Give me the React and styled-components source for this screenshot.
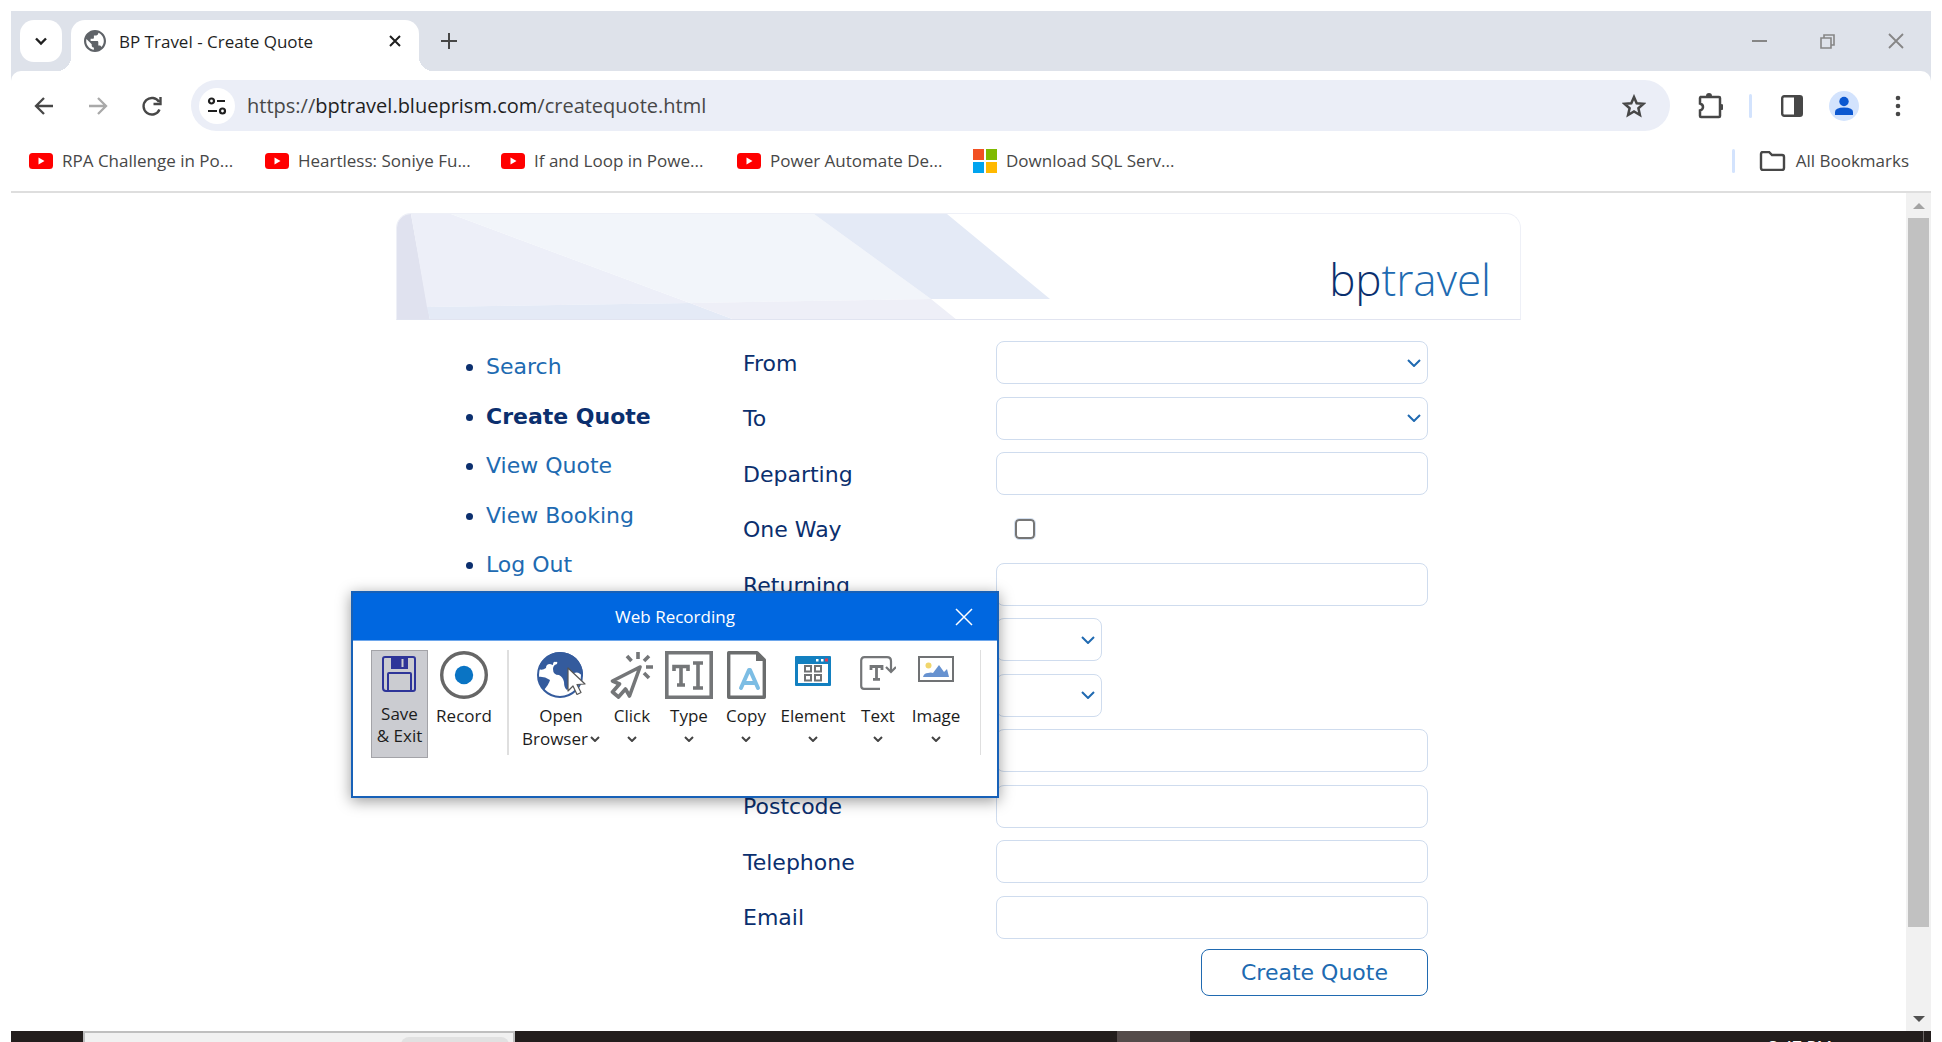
import React from 'react';
import styled, { createGlobalStyle } from 'styled-components';

const ui = '"Open Sans", "Noto Sans", sans-serif';
const page = '"DejaVu Sans", Verdana, sans-serif';

const Global = createGlobalStyle`
  * { box-sizing: border-box; }
  body { margin: 0; background: #fff; font-family: ${ui}; overflow: hidden; }
  button, input, select { font: inherit; color: inherit; margin: 0; }
  button { background: none; border: 0; padding: 0; cursor: pointer; }
  svg { display: block; flex: none; }
`;

const Screen = styled.div`
  position: relative;
  display: flex;
  flex-direction: column;
  height: 100vh;
  padding: 11px 11px 0;
`;

const TabStrip = styled.div`
  display: flex;
  align-items: flex-start;
  height: 60px;
  padding: 9px 27px 0 9px;
  background: #dee2ea;
`;
const TabSearch = styled.button`
  display: grid;
  place-items: center;
  width: 42px;
  height: 42px;
  margin-right: 9px;
  border-radius: 14px;
  background: #fff;
`;
const Tab = styled.div`
  position: relative;
  display: flex;
  align-items: center;
  width: 348px;
  height: 51px;
  padding: 0 17px 9px 13px;
  border-radius: 14px 14px 0 0;
  background: #fff;
  color: #1f1f1f;
  &::before, &::after {
    content: '';
    position: absolute;
    bottom: 0;
    width: 14px;
    height: 14px;
  }
  &::before { left: -14px; background: radial-gradient(circle at 0 0, transparent 14px, #fff 14px); }
  &::after { right: -14px; background: radial-gradient(circle at 100% 0, transparent 14px, #fff 14px); }
`;
const TabTitle = styled.span`
  flex: 1;
  padding: 2px 0 0 13px;
  font-size: 17px;
  line-height: 24px;
  white-space: nowrap;
`;
const NewTab = styled.button`
  margin: 13px auto 0 22px;
`;
const WindowControls = styled.div`
  display: flex;
  align-items: center;
  gap: 53px;
  height: 42px;
`;

const ToolbarBack = styled.div`
  background: #dee2ea;
`;
const Toolbar = styled.div`
  display: flex;
  align-items: center;
  height: 69px;
  padding: 0 20px 0 21px;
  border-radius: 10px 10px 0 0;
  background: #fff;
`;
const NavButtons = styled.div`
  display: flex;
  gap: 30px;
  margin-right: 27px;
`;
const AddressBar = styled.div`
  display: flex;
  flex: 1;
  align-items: center;
  height: 51px;
  padding: 0 24px 0 8px;
  border-radius: 26px;
  background: #ebeef7;
`;
const SiteInfo = styled.button`
  display: grid;
  place-items: center;
  width: 36px;
  height: 36px;
  border-radius: 50%;
  background: #fff;
`;
const Url = styled.span`
  flex: 1;
  padding-left: 12px;
  color: #474747;
  font-size: 20px;
  line-height: 28px;
  b { font-weight: 400; color: #1f1f1f; }
`;
const Divider = styled.span`
  width: 3px;
  height: 24px;
  border-radius: 2px;
  background: #d3e3fd;
`;
const ToolActions = styled.div`
  display: flex;
  align-items: center;
  gap: 26px;
  margin-left: 27px;
  ${Divider} { margin-right: 3px; }
`;

const Bookmarks = styled.nav`
  display: flex;
  align-items: center;
  height: 53px;
  padding: 0 22px 10px 18px;
  border-bottom: 2px solid #dedede;
  background: #fff;
`;
const Bookmark = styled.a`
  display: flex;
  align-items: center;
  gap: 9px;
  width: ${p => (p.$end ? 'auto' : '236px')};
  color: #474747;
  font-size: 17px;
  line-height: 24px;
  white-space: nowrap;
  text-decoration: none;
`;
const BookmarkEnd = styled.div`
  display: flex;
  align-items: center;
  gap: 24px;
  margin-left: auto;
`;

const Viewport = styled.div`
  display: flex;
  flex: 1;
  min-height: 0;
  background: #fff;
`;
const PageBody = styled.main`
  flex: 1;
  padding-top: 20px;
  color: #0b2f6e;
  font-family: ${page};
  font-size: 22px;
`;
const Container = styled.div`
  width: 1125px;
  max-width: 100%;
  margin: 0 auto;
`;
const Banner = styled.header`
  display: flex;
  justify-content: space-between;
  height: 107px;
  border: 1px solid #eef0f7;
  border-bottom-color: #e1e4f0;
  border-radius: 15px 15px 0 0;
  overflow: hidden;
`;
const Logo = styled.div`
  padding: 33px 29px 0 0;
  color: #0b2f6e;
  font-family: "Open Sans", "Noto Sans", sans-serif;
  font-weight: 300;
  font-size: 44px;
  line-height: 64px;
  span { color: #206ab1; }
`;
const Columns = styled.div`
  display: flex;
  padding-right: 93px;
`;
const Menu = styled.ul`
  width: 347px;
  margin: 0;
  padding: 34px 0 0 90px;
  list-style: disc;
  line-height: 26px;
`;
const MenuItem = styled.li`
  height: 26px;
  margin-bottom: ${p => (p.$tight ? '23px' : '24px')};
  a {
    color: ${p => (p.$active ? '#0b2f6e' : '#206ab1')};
    font-weight: ${p => (p.$active ? 700 : 400)};
    text-decoration: none;
  }
`;
const Form = styled.form`
  flex: 1;
`;
const Fields = styled.div`
  display: grid;
  grid-auto-rows: 1fr;
  height: 610px;
  padding-top: 15px;
  margin-bottom: 4px;
  box-sizing: content-box;
`;
const Field = styled.div`
  display: flex;
  align-items: center;
  label { width: 253px; padding-top: 2px; line-height: 28px; }
`;
const TextBox = styled.input`
  flex: 1;
  min-width: 0;
  height: 43px;
  padding: 0 12px;
  border: 1px solid #cfdcee;
  border-radius: 8px;
  background: #fff;
`;
const SelectWrap = styled.div`
  display: grid;
  flex: ${p => (p.$short ? '0 0 106px' : '1')};
  align-items: center;
  svg { grid-area: 1 / 1; justify-self: end; margin-right: 7px; pointer-events: none; }
`;
const Select = styled.select`
  grid-area: 1 / 1;
  width: 100%;
  height: 43px;
  padding: 0 12px;
  appearance: none;
  border: 1px solid #cfdcee;
  border-radius: 8px;
  background: #fff;
`;
const TickBox = styled.input`
  appearance: none;
  width: 20px;
  height: 20px;
  margin-left: 19px;
  border: 2px solid #767676;
  border-radius: 4px;
  outline: 1px solid #d3dfef;
  background: #fff;
`;
const Submit = styled.button`
  display: block;
  width: 227px;
  height: 47px;
  margin-left: auto;
  border: 1px solid #206ab1;
  border-radius: 8px;
  color: #206ab1;
  background: #fff;
`;

const ScrollBar = styled.div`
  display: flex;
  flex-direction: column;
  align-items: center;
  width: 25px;
  background: #f1f1f1;
`;
const ScrollArrow = styled.button`
  display: grid;
  place-items: center;
  width: 25px;
  height: 25px;
`;
const ScrollTrack = styled.div`
  flex: 1;
  width: 21px;
`;
const ScrollThumb = styled.div`
  height: 90%;
  background: #c1c1c1;
`;

const TaskBar = styled.div`
  display: flex;
  height: 11px;
  padding: 0 7px 0 72px;
  overflow: hidden;
  background: #231e1d;
`;
const TaskSearch = styled.div`
  width: 432px;
  padding: 4px 4px 0 0;
  border: 2px solid #bfbfbf;
  border-bottom: 0;
  background: #f1f1f1;
`;
const TaskPill = styled.div`
  width: 108px;
  height: 12px;
  margin-left: auto;
  border-radius: 8px 8px 0 0;
  background: #e1e1e1;
`;
const TaskActive = styled.div`
  width: 73px;
  margin-left: 602px;
  background: #544b4a;
`;
const TaskClock = styled.div`
  margin: 6px 91px 0 auto;
  color: #fff;
  font-size: 17px;
  line-height: 20px;
`;
const TaskEdge = styled.div`
  width: 1px;
  background: #6b6665;
`;

const Dialog = styled.section`
  position: absolute;
  top: 591px;
  left: 351px;
  width: 648px;
  height: 207px;
  border: 2px solid #1761b8;
  background: #fff;
  box-shadow: 0 3px 14px rgba(0, 0, 0, 0.4);
`;
const DialogTitle = styled.header`
  display: grid;
  grid-template-columns: 1fr auto 1fr;
  align-items: center;
  height: 48px;
  padding: 0 24px;
  border-bottom: 1px solid #6ea7ec;
  background: #0067e0;
  color: #fff;
  h2 { grid-column: 2; margin: 0; font-size: 17px; font-weight: 400; line-height: 24px; }
  button { justify-self: end; }
`;
const Ribbon = styled.div`
  display: flex;
  padding: 9px 16px 0 18px;
`;
const Tool = styled.button`
  display: flex;
  flex-direction: column;
  align-items: center;
  flex: 0 0 ${p => p.$w}px;
  min-width: 0;
  height: 108px;
  color: #1c1c1c;
  font-size: 17px;
  line-height: 22px;
  white-space: nowrap;
`;
const SaveTool = styled(Tool)`
  border: 1px solid #a3a3a8;
  background: #cbccd1;
`;
const ToolIcon = styled.span`
  display: flex;
  justify-content: center;
  height: ${p => (p.$save ? '52px' : '55px')};
  padding-top: ${p => (p.$save ? '5px' : p.$low ? '6px' : '1px')};
`;
const ToolMore = styled.span`
  display: flex;
  align-items: center;
  gap: 2px;
  height: 24px;
`;
const RibbonRule = styled.span`
  width: ${p => p.$w}px;
  height: 105px;
  margin: ${p => p.$m};
  background: #dfdfdf;
`;

const Stroke = ({ w, h = w, vb = `0 0 ${w} ${h}`, c = '#474747', sw = 2, children }) => (
  <svg width={w} height={h} viewBox={vb} fill="none" stroke={c} strokeWidth={sw} aria-hidden="true">{children}</svg>
);

const YouTube = () => (
  <svg width="24" height="16" viewBox="0 0 24 16" aria-hidden="true">
    <rect width="24" height="16" rx="3.500" fill="#f00" />
    <path d="M9.500 4.500v7L15.500 8z" fill="#fff" />
  </svg>
);
const Microsoft = () => (
  <svg width="24" height="24" viewBox="0 0 24 24" aria-hidden="true">
    <path fill="#f25022" d="M0 0h11v11H0z" /><path fill="#7fba00" d="M13 0h11v11H13z" />
    <path fill="#00a4ef" d="M0 13h11v11H0z" /><path fill="#ffb900" d="M13 13h11v11H13z" />
  </svg>
);
const Chevron = () => (
  <Stroke w={14} h={8} c="#206ab1" sw={2}><path d="M1 1l6 6 6-6" /></Stroke>
);
const MiniChevron = () => (
  <Stroke w={10} h={6} c="#444" sw={2}><path d="M1 1l4 4 4-4" /></Stroke>
);

const SaveIcon = () => (
  <Stroke w={35} h={36} c="#2e3599" sw={2}>
    <path d="M3 1h28q2 0 2 2v30q0 2-2 2H4q-3 0-3-3V3q0-2 2-2z" />
    <path d="M6 35V18q0-1 1-1h21q1 0 1 1v17" />
    <path d="M9 1h17v12H9z" fill="#2e3599" stroke="none" />
    <path d="M20.500 3v8" stroke="#cbccd1" sw={3} />
  </Stroke>
);
const RecordIcon = () => (
  <svg width="48" height="48" viewBox="0 0 48 48" aria-hidden="true">
    <circle cx="24" cy="24" r="22.3" fill="#fff" stroke="#666" strokeWidth="3.4" />
    <circle cx="24" cy="24" r="9.2" fill="#0a74c4" />
  </svg>
);
const GlobeIcon = () => (
  <svg width="50" height="48" viewBox="0 0 50 48" aria-hidden="true">
    <circle cx="24" cy="24" r="22" fill="#fff" stroke="#345b9d" strokeWidth="2" />
    <path fill="#345b9d" d="M7 10Q14 1 24 1q9 0 16 6 6 6 7 15v4q-4-6-9-4-4 2-5 9 1 5-2 8-3-2-3-8-1-5-5-7-6 0-6-6 0-4 4-5 1-3-1-2-3-1-3 3l-3-1q-4 0-4 4-4 3-7 1 0-4 4-9z" />
    <path fill="#345b9d" d="M2 26q6-1 12 3-1 4-6 10-5-5-6-13z" />
    <path fill="#fff" stroke="#555" strokeWidth="1.200" strokeLinejoin="round" d="M32 17v23l5-5 4 8.500 4-2-4-8 8-.5z" />
  </svg>
);
const ClickIcon = () => (
  <Stroke w={44} h={48} c="#747678" sw={3.6}>
    <path d="M30 16L2.500 30l7 3-7 8 6 5 7-8 4 7z" strokeLinejoin="round" />
    <path d="M28 1v7M17 5l4.500 5M39 5l-5 5M36 16h7M34 22l5 5" />
  </Stroke>
);
const TypeIcon = () => (
  <Stroke w={48} c="#747678" sw={3.6}>
    <path d="M1.800 1.800h44.400v44.400H1.800z" />
    <path d="M9 20v-4.500h14V20M16 15.500V34M12 34h8" />
    <path d="M28 12h10M28 37h10M33 12v25" sw={3} />
  </Stroke>
);
const CopyIcon = () => (
  <Stroke w={39} h={48} c="#6b6d6e" sw={3.4}>
    <path d="M1.700 1.700H30l7.300 7.300v37.300H1.700z" strokeLinejoin="round" />
    <path d="M29 2v8h9z" fill="#6b6d6e" stroke="none" />
    <path d="M14 37l8-18h1l8 18M17 32h11" stroke="#7cbde4" strokeWidth="4" strokeLinecap="round" strokeLinejoin="round" />
  </Stroke>
);
const ElementIcon = () => (
  <svg width="36" height="30" viewBox="0 0 36 30" fill="none" aria-hidden="true">
    <rect width="36" height="30" rx="1" fill="#1380c0" />
    <path d="M3 8h30v19H3z" fill="#fff" />
    <path d="M21 3h2.500v2.500H21zM26 3h2.500v2.500H26z" fill="#fff" />
    <path d="M30 2.500h3v3h-3z" fill="#e8384f" />
    <path d="M10 10h6v5.500h-6zM20 10h6v5.500h-6zM10 19h6v5.500h-6zM20 19h6v5.500h-6z" stroke="#707274" strokeWidth="2" />
  </svg>
);
const TextIcon = () => (
  <Stroke w={36} h={34} c="#747678" sw={2.2}>
    <path d="M20 32.800H4q-2.800 0-2.800-2.800V4.500q0-3.300 3.300-3.300H27q4 0 4 4V15" />
    <path d="M26 11l5 5 5-5" />
    <path d="M11 14v-3.500h11V14M16.500 10.500V23M13 23.300h7" strokeWidth="2.800" />
  </Stroke>
);
const ImageIcon = () => (
  <svg width="36" height="26" viewBox="0 0 36 26" aria-hidden="true">
    <path d="M1 1h34v24H1z" fill="#fff" stroke="#707274" strokeWidth="2" />
    <circle cx="10.500" cy="9.500" r="3" fill="#f1d66c" />
    <path d="M5 21q1-4 5-4 3-1 5 0l6-8 5 7 3-3 2 8z" fill="#6792d0" />
  </svg>
);

const BOOKMARKS = [
  'RPA Challenge in Po...', 'Heartless: Soniye Fu...', 'If and Loop in Powe...', 'Power Automate De...',
];
const MENU = ['Search', 'Create Quote', 'View Quote', 'View Booking', 'Log Out'];
const FIELDS = [
  { id: 'from', label: 'From', kind: 'select' },
  { id: 'to', label: 'To', kind: 'select' },
  { id: 'departing', label: 'Departing' },
  { id: 'oneway', label: 'One Way', kind: 'tick' },
  { id: 'returning', label: 'Returning' },
  { id: 'adults', aria: 'Adults', kind: 'short' },
  { id: 'children', aria: 'Children', kind: 'short' },
  { id: 'name', aria: 'Name' },
  { id: 'postcode', label: 'Postcode' },
  { id: 'telephone', label: 'Telephone' },
  { id: 'email', label: 'Email' },
];
const TOOLS = [
  { name: 'Click', icon: ClickIcon, w: 56 },
  { name: 'Type', icon: TypeIcon, w: 58 },
  { name: 'Copy', icon: CopyIcon, w: 56 },
  { name: 'Element', icon: ElementIcon, w: 78, low: true },
  { name: 'Text', icon: TextIcon, w: 52, low: true },
  { name: 'Image', icon: ImageIcon, w: 64, low: true },
];

function Control({ id, kind, aria }) {
  if (kind === 'tick') return <TickBox id={id} type="checkbox" />;
  if (kind === 'select' || kind === 'short') {
    return (
      <SelectWrap $short={kind === 'short'}>
        <Select id={id} aria-label={aria}><option /></Select>
        <Chevron />
      </SelectWrap>
    );
  }
  return <TextBox id={id} type="text" aria-label={aria} />;
}

function BrowserChrome() {
  return (
    <>
      <TabStrip>
        <TabSearch aria-label="Search tabs"><Stroke w={14} h={9} c="#1f1f1f"><path d="M2 1.500l5 5 5-5" strokeWidth="2.400" /></Stroke></TabSearch>
        <Tab>
          <svg width="22" height="22" viewBox="2 2 20 20" aria-hidden="true">
            <path fill="#5f6368" d="M12 2C6.480 2 2 6.480 2 12s4.480 10 10 10 10-4.480 10-10S17.520 2 12 2zm-1 17.930c-3.950-.49-7-3.850-7-7.930 0-.62.08-1.210.21-1.790L9 15v1c0 1.100.9 2 2 2v1.930zm6.900-2.540c-.26-.81-1-1.390-1.900-1.390h-1v-3c0-.55-.45-1-1-1H8v-2h2c.55 0 1-.45 1-1V7h2c1.100 0 2-.9 2-2v-.41c2.930 1.190 5 4.060 5 7.410 0 2.080-.8 3.970-2.100 5.390z" />
          </svg>
          <TabTitle>BP Travel - Create Quote</TabTitle>
          <button aria-label="Close tab"><Stroke w={14} c="#1f1f1f"><path d="M2 2l10 10M12 2L2 12" /></Stroke></button>
        </Tab>
        <NewTab aria-label="New tab"><Stroke w={16}><path d="M8 0v16M0 8h16" /></Stroke></NewTab>
        <WindowControls>
          <button aria-label="Minimize"><Stroke w={15} c="#868686"><path d="M0 7h15" /></Stroke></button>
          <button aria-label="Restore"><Stroke w={15} c="#868686" sw={1.600}><path d="M1 4h10v10H1zM4 4V1h10v10h-3" /></Stroke></button>
          <button aria-label="Close"><Stroke w={16} c="#868686" sw={1.800}><path d="M1 1l14 14M15 1L1 15" /></Stroke></button>
        </WindowControls>
      </TabStrip>
      <ToolbarBack>
        <Toolbar>
          <NavButtons>
            <button aria-label="Back"><Stroke w={24} sw={2.300}><path d="M21 12H4M12 4l-8 8 8 8" /></Stroke></button>
            <button aria-label="Forward"><Stroke w={24} c="#a9a9a9" sw={2.300}><path d="M3 12h17M12 4l8 8-8 8" /></Stroke></button>
            <button aria-label="Reload"><Stroke w={24} sw={2.400}><path d="M19.500 15.500A8.300 8.300 0 1 1 19 8M20.500 3v7h-7" /></Stroke></button>
          </NavButtons>
          <AddressBar>
            <SiteInfo aria-label="Site information">
              <Stroke w={20} h={18} c="#1f1f1f" sw={2.200}>
                <circle cx="4.500" cy="4" r="2.500" /><path d="M10 4h8M1 14h9" /><circle cx="15.500" cy="14" r="2.500" />
              </Stroke>
            </SiteInfo>
            <Url>https://<b>bptravel.blueprism.com</b>/createquote.html</Url>
            <button aria-label="Bookmark this tab"><Stroke w={24} sw={2.500}><path d="M12 3l2.700 6.200 6.800.6-5.100 4.500 1.500 6.700-5.900-3.500L6.100 21l1.500-6.700L2.500 9.800l6.800-.6z" /></Stroke></button>
          </AddressBar>
          <ToolActions>
            <button aria-label="Extensions">
              <Stroke w={26} h={28} sw={2.500}>
                <path d="M3 5h19q1 0 1 1v18q0 1-1 1H4q-1 0-1-1v-5.500q3-1 3-3.500t-3-3.500V6q0-1 1-1z" />
                <path d="M9 4q0-3 3-3t3 3zM24 12q3 0 3 3t-3 3z" fill="#474747" stroke="none" />
              </Stroke>
            </button>
            <Divider />
            <button aria-label="Side panel"><Stroke w={22} sw={2.400}><rect x="1.200" y="1.200" width="19.600" height="19.600" rx="2" /><path d="M13 1h8v20h-8z" fill="#474747" stroke="none" /></Stroke></button>
            <button aria-label="Profile">
              <svg width="30" height="30" viewBox="0 0 30 30" aria-hidden="true">
                <circle cx="15" cy="15" r="15" fill="#d3e3fd" />
                <circle cx="15" cy="10.500" r="4.700" fill="#0b57d0" /><path d="M6 24v-3q0-4.500 9-4.500t9 4.500v3z" fill="#0b57d0" />
              </svg>
            </button>
            <button aria-label="Menu">
              <svg width="26" height="22" viewBox="0 0 26 22" fill="#474747" aria-hidden="true"><circle cx="13" cy="3" r="2.300" /><circle cx="13" cy="11" r="2.300" /><circle cx="13" cy="19" r="2.300" /></svg>
            </button>
          </ToolActions>
        </Toolbar>
      </ToolbarBack>
      <Bookmarks>
        {BOOKMARKS.map(b => <Bookmark key={b} href="#"><YouTube />{b}</Bookmark>)}
        <Bookmark href="#"><Microsoft />Download SQL Serv...</Bookmark>
        <BookmarkEnd>
          <Divider />
          <Bookmark href="#" $end>
            <Stroke w={28} h={20} vb="0 0 28 20" sw={2.400}><path d="M2 3q0-2 2-2h6l3 3h10q2 0 2 2v11q0 2-2 2H4q-2 0-2-2z" /></Stroke>
            All Bookmarks
          </Bookmark>
        </BookmarkEnd>
      </Bookmarks>
    </>
  );
}

function RecordingDialog() {
  return (
    <Dialog aria-label="Web Recording">
      <DialogTitle>
        <h2>Web Recording</h2>
        <button aria-label="Close recording"><Stroke w={18} c="#fff" sw={1.500}><path d="M1 1l16 16M17 1L1 17" /></Stroke></button>
      </DialogTitle>
      <Ribbon>
        <SaveTool $w={57}>
          <ToolIcon $save><SaveIcon /></ToolIcon>
          <span>Save</span>
          <span>&amp; Exit</span>
        </SaveTool>
        <Tool $w={72}>
          <ToolIcon><RecordIcon /></ToolIcon>
          <span>Record</span>
        </Tool>
        <RibbonRule $w={2} $m="0 12px 0 7px" />
        <Tool $w={80}>
          <ToolIcon><GlobeIcon /></ToolIcon>
          <span>Open</span>
          <ToolMore>Browser<MiniChevron /></ToolMore>
        </Tool>
        <RibbonRule $w={0} $m="0 3px 0 0" />
        {TOOLS.map(({ name, icon: Icon, w, low }) => (
          <Tool key={name} $w={w}>
            <ToolIcon $low={low}><Icon /></ToolIcon>
            <span>{name}</span>
            <ToolMore><MiniChevron /></ToolMore>
          </Tool>
        ))}
        <RibbonRule $w={1} $m="0 0 0 auto" />
      </Ribbon>
    </Dialog>
  );
}

export default function App() {
  return (
    <Screen>
      <Global />
      <BrowserChrome />
      <Viewport>
        <PageBody>
          <Container>
            <Banner>
              <svg width="660" height="106" viewBox="0 0 660 106" aria-hidden="true">
                <path fill="#e0e2ef" d="M0 0h14l19 106H0z" />
                <path fill="#edeff8" d="M14 0h40l239 89-263 4z" />
                <path fill="#f2f5fa" d="M54 0h363l117 85-241 4z" />
                <path fill="#e4eaf6" d="M417 0h133l103 85H534z" />
                <path fill="#e4eaf6" d="M30 93l263-4 45 17H33z" />
                <path fill="#eeeff7" d="M293 89l241-4 26 21H338z" />
              </svg>
              <Logo>bp<span>travel</span></Logo>
            </Banner>
            <Columns>
              <Menu>
                {MENU.map((m, i) => (
                  <MenuItem key={m} $active={m === 'Create Quote'} $tight={i % 2 === 1}><a href="#">{m}</a></MenuItem>
                ))}
              </Menu>
              <Form onSubmit={e => e.preventDefault()}>
                <Fields>
                  {FIELDS.map(f => (
                    <Field key={f.id}>
                      <label htmlFor={f.id}>{f.label}</label>
                      <Control {...f} />
                    </Field>
                  ))}
                </Fields>
                <Submit>Create Quote</Submit>
              </Form>
            </Columns>
          </Container>
        </PageBody>
        <ScrollBar>
          <ScrollArrow aria-label="Scroll up"><svg width="12" height="6" viewBox="0 0 12 6"><path d="M6 0l6 6H0z" fill="#a3a3a3" /></svg></ScrollArrow>
          <ScrollTrack><ScrollThumb /></ScrollTrack>
          <ScrollArrow aria-label="Scroll down"><svg width="12" height="6" viewBox="0 0 12 6"><path d="M6 6l6-6H0z" fill="#505050" /></svg></ScrollArrow>
        </ScrollBar>
      </Viewport>
      <TaskBar>
        <TaskSearch><TaskPill /></TaskSearch>
        <TaskActive />
        <TaskClock>3:47 PM</TaskClock>
        <TaskEdge />
      </TaskBar>
      <RecordingDialog />
    </Screen>
  );
}
